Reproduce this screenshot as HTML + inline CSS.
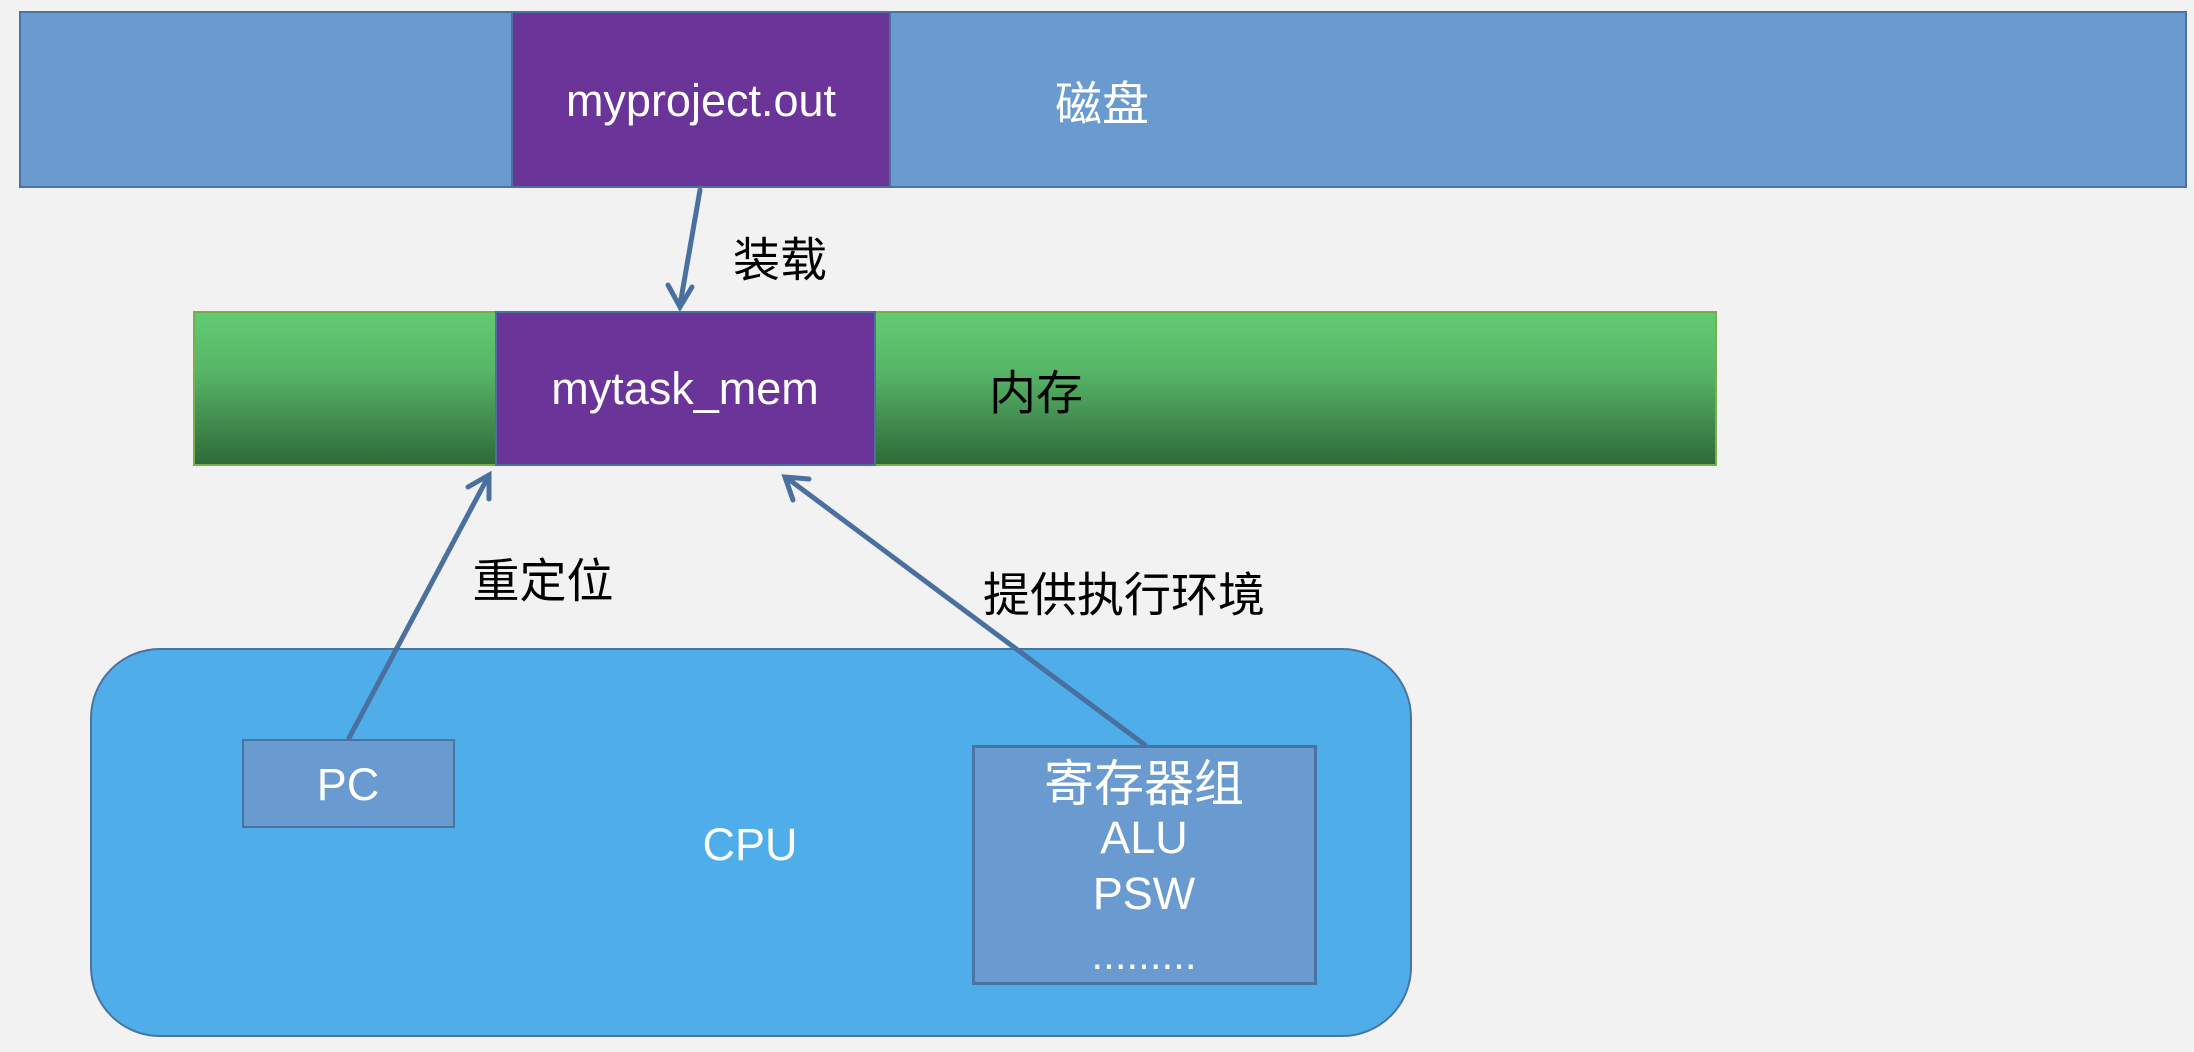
<!DOCTYPE html>
<html><head><meta charset="utf-8"><style>
html,body{margin:0;padding:0}
body{width:2194px;height:1052px;background:#f2f2f2;position:relative;overflow:hidden;font-family:"Liberation Sans","Noto Sans CJK SC",sans-serif}
.a{position:absolute;box-sizing:border-box}
.t{position:absolute;transform:translate(-50%,-50%);white-space:nowrap;font-size:45px}
.c{font-size:47px}
.w{color:#fff}
</style></head><body>
<div class="a" style="left:19px;top:11px;width:2168px;height:177px;background:#6a9bd0;border:2px solid #4a74a0"></div>
<div class="a" style="left:511px;top:11px;width:380px;height:177px;background:#6a3499;border:2px solid #4a6fa0"></div>
<div class="t w" style="left:701px;top:101px">myproject.out</div>
<div class="t w c" style="left:1102px;top:100px">磁盘</div>

<div class="a" style="left:193px;top:311px;width:1524px;height:155px;background:linear-gradient(#62cb72,#56b466 40%,#2f6a38);border:2px solid #7aad4c"></div>
<div class="a" style="left:495px;top:311px;width:381px;height:155px;background:#6a3499;border:2px solid #4a6fa0"></div>
<div class="t w" style="left:685px;top:389px">mytask_mem</div>
<div class="t c" style="left:1036px;top:389px;color:#000">内存</div>

<div class="t c" style="left:780px;top:256px;color:#000">装载</div>
<div class="t c" style="left:543px;top:577px;color:#000">重定位</div>
<div class="t c" style="left:1124px;top:591px;color:#000">提供执行环境</div>

<div class="a" style="left:90px;top:648px;width:1322px;height:389px;background:#4faeea;border:2px solid #4a74a0;border-radius:70px"></div>
<div class="a" style="left:242px;top:739px;width:213px;height:89px;background:#6a9bd0;border:2px solid #4a74a0"></div>
<div class="t w" style="left:348px;top:785px">PC</div>
<div class="t w" style="left:750px;top:845px">CPU</div>
<div class="a" style="left:972px;top:745px;width:345px;height:240px;background:#6a9bd0;border:3px solid #4a74a0"></div>
<div class="t w" style="left:1144px;top:780px;font-size:50px">寄存器组</div>
<div class="t w" style="left:1144px;top:838px">ALU</div>
<div class="t w" style="left:1144px;top:894px">PSW</div>
<div class="t w" style="left:1144px;top:955px;font-size:42px">.........</div>

<svg class="a" style="left:0;top:0" width="2194" height="1052">
<g stroke="#4a70a0" stroke-width="5" fill="none" stroke-linecap="round">
<line x1="700" y1="190" x2="680" y2="305"/>
<polyline points="668,285 680,307 692,287"/>
<line x1="349" y1="738" x2="488" y2="477"/>
<polyline points="468,487 489,475 489,499"/>
<line x1="1145" y1="745" x2="787" y2="478"/>
<polyline points="793,500 785,477 809,479"/>
</g></svg>
</body></html>
